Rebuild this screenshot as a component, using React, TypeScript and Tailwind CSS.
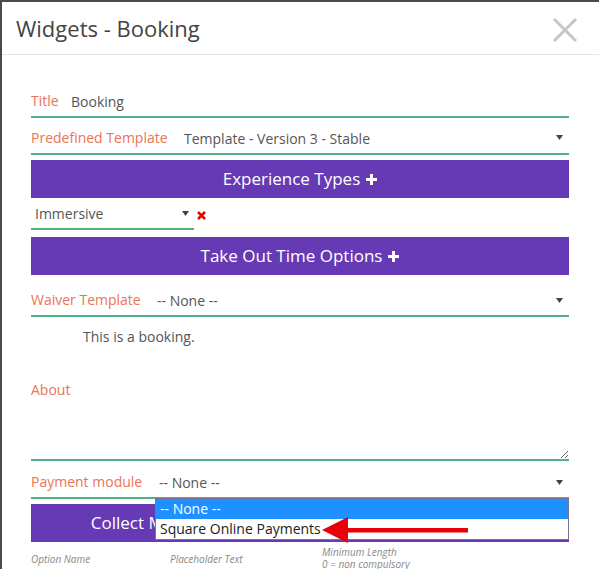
const label = 'text-[14px] leading-[20px] text-[#ec7357] mb-[5px] shrink-0';
const value = 'text-[14px] leading-[20px] text-[#555] mb-[4px]';
const line = 'border-b-2 border-[#50b08c]';

function Arrow() {
  return (
    <svg width="7" height="5" viewBox="0 0 7 5" className="shrink-0">
      <polygon points="0,0 7,0 3.5,5" fill="#444" />
    </svg>
  );
}

function Plus() {
  return (
    <svg width="11" height="11" viewBox="0 0 11 11" className="ml-[6px] mt-[1px]">
      <rect x="4" y="0" width="3" height="11" fill="#fff" />
      <rect x="0" y="4" width="11" height="3" fill="#fff" />
    </svg>
  );
}

function Bar({ text }: { text: string }) {
  return (
    <div className="flex h-[38px] items-center justify-center bg-[#663ab4] text-[17px] text-white">
      <span className="whitespace-nowrap">{text}</span>
      <Plus />
    </div>
  );
}

function SelectRow({
  name,
  labelWidth,
  text,
  height,
  arrowOffset,
}: {
  name: string;
  labelWidth: string;
  text: string;
  height: string;
  arrowOffset: string;
}) {
  return (
    <div className={`flex items-end ${height} ${line}`}>
      <div className={`${label} ${labelWidth}`}>{name}</div>
      <div className={`flex flex-1 items-center justify-between pr-[6px] ${value}`}>
        <span>{text}</span>
        <span className={arrowOffset}>
          <Arrow />
        </span>
      </div>
    </div>
  );
}

export default function App() {
  return (
    <div className="relative h-[569px] w-[599px] overflow-hidden border-l-2 border-t-2 border-[#4a4a4a] bg-white font-['Open_Sans',sans-serif]">
      <div className="flex h-[53px] items-center justify-between border-b border-[#e5e5e5] pl-[14px] pr-[21px]">
        <h1 className="text-[22px] text-[#444]">Widgets - Booking</h1>
        <svg width="26" height="26" viewBox="0 0 26 26" className="mt-[4px]">
          <path d="M2 2 L24 24 M24 2 L2 24" stroke="#c6c6c6" strokeWidth="3" />
        </svg>
      </div>

      <div className="flex flex-col pl-[29px] pr-[30px]">
        <div className={`mt-[35px] flex h-[28px] items-end ${line}`}>
          <div className={`${label} w-[40px]`}>Title</div>
          <div className={value}>Booking</div>
        </div>

        <SelectRow
          name="Predefined Template"
          labelWidth="w-[153px]"
          text="Template - Version 3 - Stable"
          height="h-[37px]"
          arrowOffset="-mt-[3px]"
        />

        <div className="mt-[5px]">
          <Bar text="Experience Types" />
        </div>

        <div className="flex items-end">
          <div className={`flex h-[32px] w-[163px] items-end justify-between pl-[4px] pr-[5px] ${line}`}>
            <span className={value}>Immersive</span>
            <span className="mb-[12px]">
              <Arrow />
            </span>
          </div>
          <svg width="9" height="9" viewBox="0 0 9 9" className="mb-[10px] ml-[3px]">
            <path d="M1 1 L8 8 M8 1 L1 8" stroke="#e00" strokeWidth="2.6" />
          </svg>
        </div>

        <div className="mt-[7px]">
          <Bar text="Take Out Time Options" />
        </div>

        <SelectRow
          name="Waiver Template"
          labelWidth="w-[126px]"
          text="-- None --"
          height="h-[42px]"
          arrowOffset="-mt-[1px]"
        />

        <div className="mt-[10px] pl-[52px] text-[14px] leading-[20px] text-[#555]">This is a booking.</div>

        <div className="mt-[33px] text-[14px] leading-[20px] text-[#ec7357]">About</div>
        <textarea
          className={`block h-[61px] w-full resize-y border-0 bg-white outline-none ${line}`}
          defaultValue=""
        />

        <SelectRow
          name="Payment module"
          labelWidth="w-[128px]"
          text="-- None --"
          height="h-[38px]"
          arrowOffset="-mt-[2px]"
        />

        <div className="mt-[5px]">
          <Bar text="Collect More Information From Guests At Bookings" />
        </div>

        <div className="mt-[4px] flex items-start text-[10px] italic leading-[12px] text-[#888]">
          <div className="mt-[7px] w-[139px]">Option Name</div>
          <div className="mt-[7px] w-[152px]">Placeholder Text</div>
          <div>
            <div>Minimum Length</div>
            <div>0 = non compulsory</div>
          </div>
        </div>
      </div>

      <div className="absolute left-[153px] top-[496px] w-[414px] border border-[#7a7490] bg-white text-[14px] leading-[20px]">
        <div className="bg-[#1e90ff] pl-[4px] text-white">-- None --</div>
        <div className="pl-[4px] text-[#222]">Square Online Payments</div>
      </div>

      <svg
        width="146"
        height="26"
        viewBox="0 0 146 26"
        className="absolute left-[320px] top-[515px]"
      >
        <polygon points="0,13 26,0 26,11 146,11 146,15.5 26,15.5 26,26" fill="#e8000b" />
      </svg>
    </div>
  );
}
